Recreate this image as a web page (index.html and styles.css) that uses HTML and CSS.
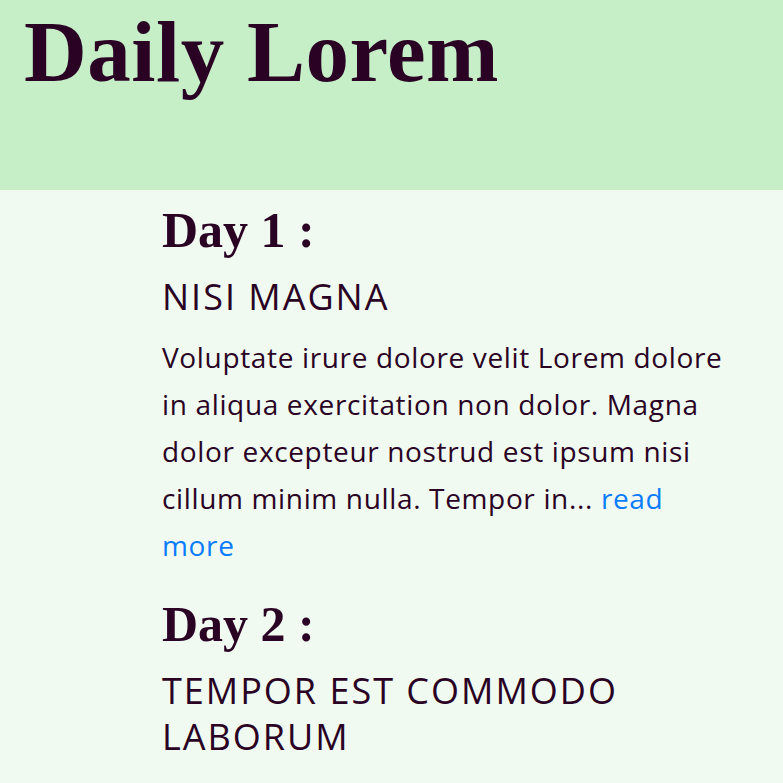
FILE: index.html
```html
<!DOCTYPE html>
<html lang="en">
<head>
<meta charset="utf-8">
<title>Daily Lorem</title>
<link rel="stylesheet" href="styles.css">
</head>
<body>
<header class="masthead">
  <h1 class="masthead-title">Daily Lorem</h1>
</header>
<main class="days">
  <article class="day">
    <h2 class="day-title">Day 1 :</h2>
    <h3 class="day-subtitle">NISI MAGNA</h3>
    <p class="day-text">Voluptate irure dolore velit Lorem dolore in aliqua exercitation non dolor. Magna dolor excepteur nostrud est ipsum nisi cillum minim nulla. Tempor in... <a class="read-more" href="#">read more</a></p>
  </article>
  <article class="day">
    <h2 class="day-title">Day 2 :</h2>
    <h3 class="day-subtitle">TEMPOR EST COMMODO LABORUM</h3>
  </article>
</main>
</body>
</html>
```
FILE: styles.css
```css
* { box-sizing: border-box; }
html, body {
  margin: 0;
  padding: 0;
  background: #f0faf0;
  color: #2a0224;
}
body {
  font-family: "Open Sans", "Lato", sans-serif;
}
.masthead {
  height: 190px;
  background: #c6efc8;
  padding: 8px 24px 0;
}
.masthead-title {
  margin: 0;
  font-family: "Liberation Serif", serif;
  font-weight: bold;
  font-size: 87px;
  line-height: 1;
  letter-spacing: 0.5px;
}
.days {
  padding: 0 0 0 162px;
  width: 730px;
}
.day + .day {
  margin-top: 25px;
}
.day-title {
  margin: 10px 0 0;
  font-family: "Liberation Serif", serif;
  font-weight: bold;
  font-size: 50px;
  line-height: 60px;
}
.day-subtitle {
  margin: 14px 0 0;
  font-weight: normal;
  font-size: 36px;
  line-height: 46px;
  letter-spacing: 2px;
}
.day-text {
  margin: 14px 0 0;
  font-size: 28px;
  line-height: 47px;
  letter-spacing: 0.65px;
}
.read-more {
  color: #0a7cff;
  text-decoration: none;
}
```
